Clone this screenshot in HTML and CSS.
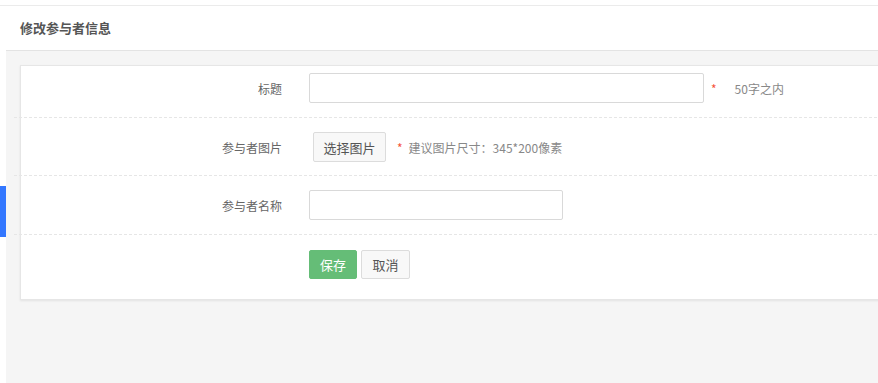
FILE: index.html
```html
<!DOCTYPE html>
<html lang="zh-CN">

<head>
    <meta charset="UTF-8" />
    <meta name="viewport" content="width=device-width, initial-scale=1.0" />
    <title>修改参与者信息</title>
    <link rel="stylesheet" href="styles.css">
</head>

<body>
    <div class="topbar"></div>
    <div class="layout">
        <aside class="side">
            <span class="side-mark"></span>
        </aside>
        <main class="main">
            <div class="page-head">修改参与者信息</div>
            <div class="page-body">
                <form class="card">
                    <div class="form-row first">
                        <label class="form-label" for="title">标题</label>
                        <div class="form-field">
                            <input type="text" id="title" class="input input-long" />
                            <span class="req">*</span>
                            <span class="hint hint-far">50字之内</span>
                        </div>
                    </div>
                    <div class="form-row pick">
                        <label class="form-label">参与者图片</label>
                        <div class="form-field">
                            <button type="button" class="btn btn-pick">选择图片</button>
                            <span class="req">*</span>
                            <span class="hint">建议图片尺寸：345*200像素</span>
                        </div>
                    </div>
                    <div class="form-row">
                        <label class="form-label" for="name">参与者名称</label>
                        <div class="form-field">
                            <input type="text" id="name" class="input input-short" />
                        </div>
                    </div>
                    <div class="form-row last">
                        <span class="form-label"></span>
                        <div class="form-field">
                            <button type="submit" class="btn btn-save">保存</button>
                            <button type="button" class="btn btn-cancel">取消</button>
                        </div>
                    </div>
                </form>
            </div>
        </main>
    </div>
</body>

</html>
```

FILE: styles.css
```css
* {
    box-sizing: border-box;
}

body {
    margin: 0;
    font-family: "Noto Sans CJK SC", "Liberation Sans", sans-serif;
    font-size: 12px;
    color: #666;
    background-color: #ffffff;
    overflow: hidden;
}

.topbar {
    height: 6px;
    background-color: #ffffff;
    border-bottom: 1px solid #ebebeb;
}

.layout {
    display: flex;
    height: 377px;
}

.side {
    width: 6px;
    flex-shrink: 0;
    background-color: #ffffff;
    padding-top: 180px;
}

.side-mark {
    display: block;
    width: 6px;
    height: 51px;
    background-color: #3377ff;
}

.main {
    flex: 1;
    min-width: 0;
    background-color: #f5f5f5;
    overflow: hidden;
}

.page-head {
    height: 45px;
    line-height: 44px;
    padding-left: 14px;
    background-color: #ffffff;
    border-bottom: 1px solid #e3e3e3;
    font-size: 13px;
    font-weight: bold;
    color: #555;
}

.page-body {
    padding: 14px 0 0 14px;
}

.card {
    margin-right: -30px;
    background-color: #ffffff;
    border: 1px solid #e6e6e6;
    box-shadow: 0 1px 2px rgba(0, 0, 0, 0.08);
}

.form-row {
    display: flex;
    align-items: center;
    margin-left: -7px;
    padding: 14px 0;
    border-bottom: 1px dashed #e6e6e6;
}

.form-row.first {
    padding-top: 7px;
}

.form-row.pick {
    padding-bottom: 13px;
}

.form-row.last {
    padding: 15px 0 20px;
    border-bottom: none;
}

.form-label {
    width: 295px;
    flex-shrink: 0;
    padding-right: 27px;
    text-align: right;
    color: #666;
}

.form-field {
    display: flex;
    align-items: center;
}

.input {
    height: 30px;
    border: 1px solid #d9d9d9;
    border-radius: 2px;
    padding: 0 8px;
    font-size: 12px;
    background-color: #ffffff;
}

.input-long {
    width: 395px;
}

.input-short {
    width: 254px;
}

.req {
    color: #f5543a;
    margin-left: 7px;
    font-size: 12px;
}

.hint {
    color: #888;
    margin-left: 6px;
}

.hint-far {
    margin-left: 18px;
}

.btn {
    height: 30px;
    padding: 0;
    border-radius: 2px;
    font-family: inherit;
    font-size: 13px;
    cursor: pointer;
}

.btn-pick {
    width: 73px;
    margin-left: 4px;
    margin-right: 4px;
    background-color: #f8f8f8;
    border: 1px solid #dcdcdc;
    color: #555;
}

.btn-save {
    width: 48px;
    height: 29px;
    background-color: #65bd77;
    border: 1px solid #65bd77;
    color: #ffffff;
}

.btn-cancel {
    width: 49px;
    height: 29px;
    margin-left: 4px;
    background-color: #f8f8f8;
    border: 1px solid #dcdcdc;
    color: #555;
}
```
